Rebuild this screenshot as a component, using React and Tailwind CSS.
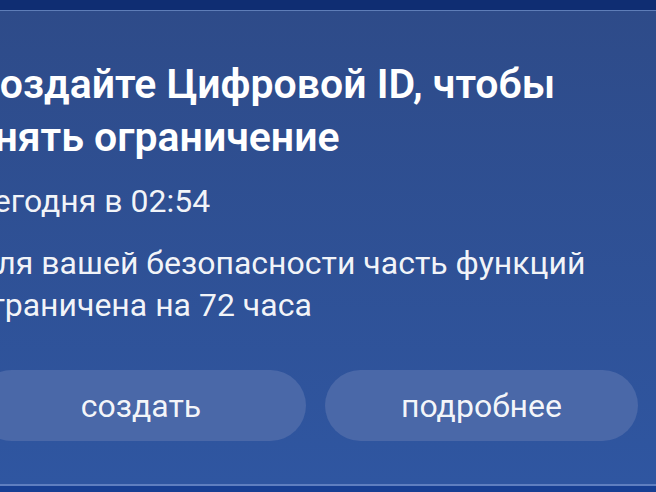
export default function App() {
  return (
    <div className="w-[656px] h-[492px] overflow-hidden bg-[#102c6e] flex flex-col" style={{ fontFamily: 'Roboto, "Noto Sans", sans-serif' }}>
      <div className="h-[10px] shrink-0 bg-[#0f2d72]" />
      <div className="h-[1px] shrink-0 bg-[#5e7db8]" />
      <div className="flex-1 -ml-[40px] w-[696px] bg-gradient-to-b from-[#2e4b89] to-[#2f56a1] flex flex-col text-white">
        <div className="pl-[13px] pt-[47px]">
          <h1 className="text-[41px] leading-[53px] font-semibold whitespace-nowrap">
            Создайте Цифровой ID, чтобы<br />снять ограничение
          </h1>
          <p className="mt-[17px] text-[32px] leading-[40px] text-white/95 whitespace-nowrap">Сегодня в 02:54</p>
          <p className="mt-[21px] text-[32px] leading-[42px] text-white/95 whitespace-nowrap">
            Для вашей безопасности часть функций<br />ограничена на 72 часа
          </p>
        </div>
        <div className="mt-[44px] pl-[16px] pr-[18px] flex gap-[19px]">
          <button className="w-[330px] h-[71px] rounded-full bg-[#4a68a8] text-[32px] text-white/95">создать</button>
          <button className="w-[313px] h-[71px] rounded-full bg-[#4a68a8] text-[32px] text-white/95">подробнее</button>
        </div>
        <div className="flex-1" />
      </div>
      <div className="h-[2px] shrink-0 bg-[#5f7fc0]" />
      <div className="h-[6px] shrink-0 bg-[#173f93]" />
    </div>
  );
}
